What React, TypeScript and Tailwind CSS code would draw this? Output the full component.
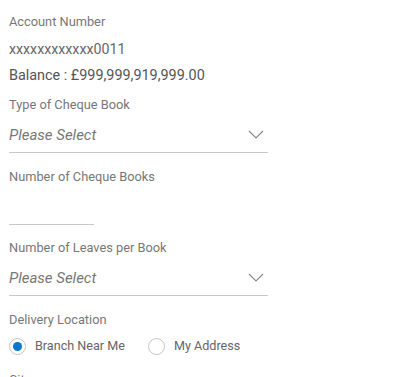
import React from "react";

function Chevron() {
  return (
    <svg width="16" height="9" viewBox="0 0 16 9" fill="none">
      <path d="M1 1 L8 8 L15 1" stroke="#8a8a8a" strokeWidth="1.2" />
    </svg>
  );
}

function Select({ mt }: { mt: string }) {
  return (
    <div className={`flex w-[259px] items-center justify-between border-b border-[#c8c8c8] pb-[7px] ${mt}`}>
      <span className="text-[15px] leading-[20px] italic text-[#777]">Please Select</span>
      <span className="mr-[4px] mt-[-1px]"><Chevron /></span>
    </div>
  );
}

function Radio({ checked, label }: { checked: boolean; label: string }) {
  return (
    <div className="flex items-center">
      <span className="flex h-[17px] w-[17px] items-center justify-center rounded-full border border-[#c4c4c4] bg-white">
        {checked && <span className="h-[9px] w-[9px] rounded-full bg-[#0a78cd]" />}
      </span>
      <span className="ml-[9px] text-[12.6px] leading-[20px] text-[#666]">{label}</span>
    </div>
  );
}

export default function App() {
  return (
    <div
      className="h-[377px] w-[415px] overflow-hidden bg-white pl-[9px] pt-[14px]"
      style={{ fontFamily: "Roboto, 'Liberation Sans', sans-serif" }}
    >
      <div className="text-[12.8px] leading-[16px] text-[#777]">Account Number</div>
      <div className="mt-[9px] text-[14.2px] leading-[20px] text-[#666]">xxxxxxxxxxxx0011</div>
      <div className="mt-[7px] text-[14.4px] leading-[20px] text-[#555]">Balance : £999,999,919,999.00</div>
      <div className="mt-[11px] text-[12.8px] leading-[16px] text-[#777]">Type of Cheque Book</div>
      <Select mt="mt-[12px]" />
      <div className="mt-[16px] text-[12.8px] leading-[16px] text-[#777]">Number of Cheque Books</div>
      <div className="h-[40px] w-[85px] border-b border-[#c8c8c8]" />
      <div className="mt-[15px] text-[12.8px] leading-[16px] text-[#777]">Number of Leaves per Book</div>
      <Select mt="mt-[12px]" />
      <div className="mt-[16px] text-[12.8px] leading-[16px] text-[#777]">Delivery Location</div>
      <div className="mt-[8px] flex items-center gap-[23px]">
        <Radio checked label="Branch Near Me" />
        <Radio checked={false} label="My Address" />
      </div>
      <div className="mt-[16px] text-[12.8px] leading-[16px] text-[#777]">City</div>
    </div>
  );
}
